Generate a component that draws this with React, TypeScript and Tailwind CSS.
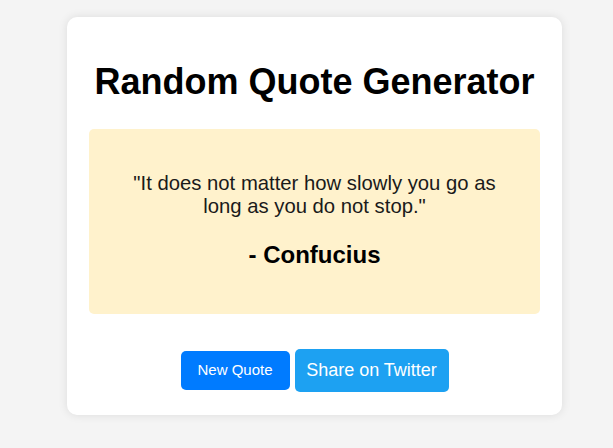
export default function App() {
  return (
    <div className="min-h-[448px] w-full bg-[#f4f4f4] pt-[17px] font-['Liberation_Sans',Arial,sans-serif]">
      <div className="ml-[67px] w-[495px] rounded-[10px] bg-white px-[22px] pt-[20px] pb-[23px] shadow-[0_0_10px_rgba(0,0,0,0.1)]">
        <h1 className="mt-[24px] mb-[27px] text-center text-[36px] font-bold leading-[41px] text-black">
          Random Quote Generator
        </h1>
        <div className="rounded-[5px] bg-[#fff2cc] px-[40px] pt-[43px] pb-[45px] text-center">
          <p className="text-[20.3px] leading-[23px] text-[#1a1a1a]">
            "It does not matter how slowly you go as long as you do not stop."
          </p>
          <p className="mt-[23px] text-[24px] font-bold leading-[28px] text-black">- Confucius</p>
        </div>
        <div className="mt-[35px] flex items-center justify-center gap-[5px]">
          <button className="flex h-[39px] w-[109px] items-center justify-center rounded-[5px] bg-[#007bff] text-[15px] text-white">
            New Quote
          </button>
          <button className="flex h-[43px] w-[154px] items-center justify-center rounded-[5px] bg-[#1da1f2] text-[18px] text-white">
            Share on Twitter
          </button>
        </div>
      </div>
    </div>
  );
}
